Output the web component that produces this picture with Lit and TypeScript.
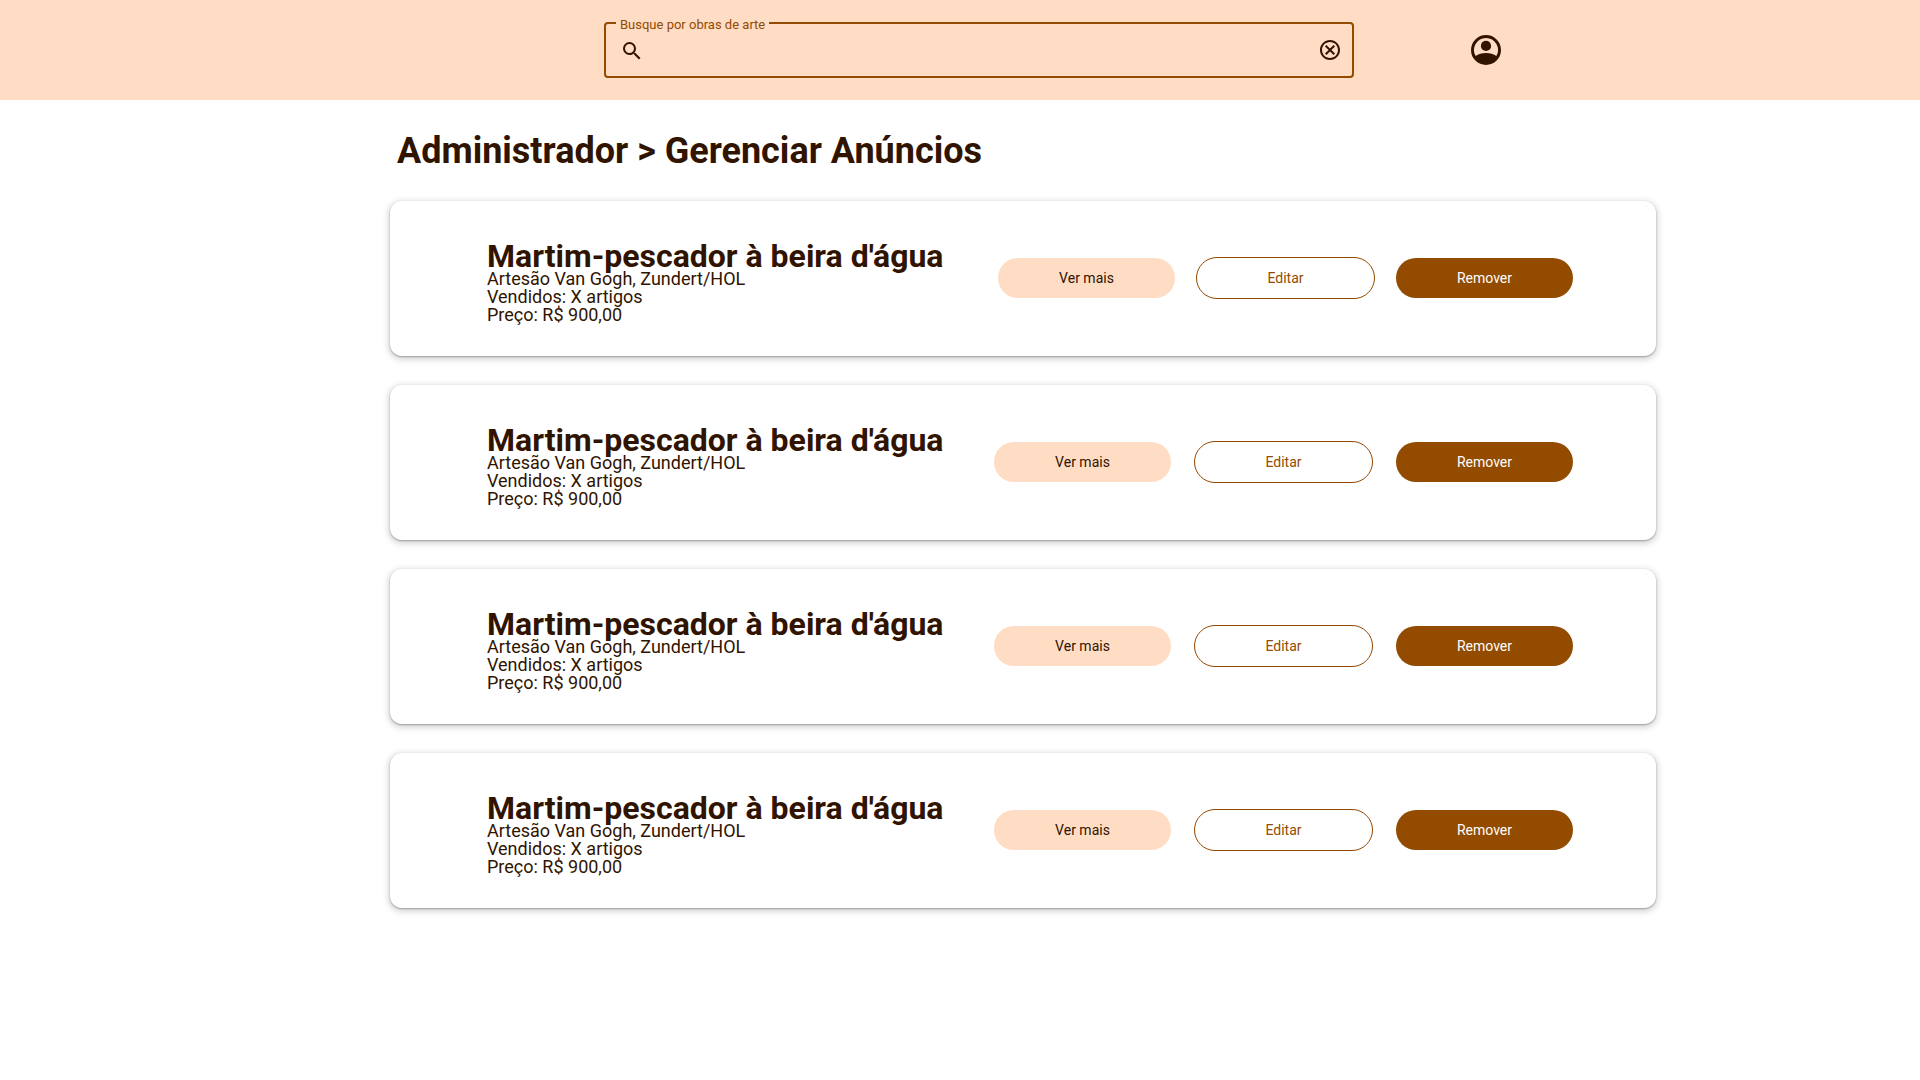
import { LitElement, html, css } from "lit";
import { customElement, property } from "lit/decorators.js";
import { classMap } from "lit/directives/class-map.js";

interface Listing {
  title: string;
  artisan: string;
  sold: string;
  price: string;
}

const listings: Listing[] = Array.from({ length: 4 }, () => ({
  title: "Martim-pescador à beira d'água",
  artisan: "Artesão Van Gogh, Zundert/HOL",
  sold: "Vendidos: X artigos",
  price: "Preço: R$ 900,00",
}));

@customElement("search-bar")
export class SearchBar extends LitElement {
  static styles = css`
    :host {
      display: block;
      min-width: 0;
    }
    .field {
      margin: 0;
      padding: 0 10px 9px;
      min-width: 0;
      border: 2px solid #934b00;
      border-radius: 4px;
    }
    .legend {
      padding: 4px 4px 0;
      font-size: 13px;
      line-height: 16px;
      color: #934b00;
    }
    .row {
      display: flex;
      align-items: center;
      gap: 16px;
      height: 34px;
      padding-left: 4px;
    }
    .icon {
      display: block;
      flex: none;
      width: 24px;
      height: 24px;
      fill: #301400;
    }
    .input {
      flex: 1;
      min-width: 0;
      height: 24px;
      padding: 0;
      border: 0;
      outline: 0;
      background: transparent;
      font: 16px/24px Roboto, sans-serif;
      color: #301400;
    }
    .clear {
      padding: 0;
      border: 0;
      background: none;
      cursor: pointer;
    }
  `;

  render() {
    return html`
      <fieldset class="field">
        <legend class="legend"><label for="search">Busque por obras de arte</label></legend>
        <div class="row">
          <svg class="icon" viewBox="0 -1 24 24" aria-hidden="true">
            <path d="M15.5 14h-.79l-.28-.27A6.471 6.471 0 0 0 16 9.5 6.5 6.5 0 1 0 9.5 16c1.61 0 3.09-.59 4.23-1.57l.27.28v.79l5 4.99L20.49 19l-4.99-5zm-6 0C7.01 14 5 11.99 5 9.5S7.01 5 9.5 5 14 7.01 14 9.5 11.99 14 9.5 14z" />
          </svg>
          <input class="input" id="search" type="text" />
          <button class="clear" type="button" aria-label="Limpar busca">
            <svg class="icon" viewBox="0 0 24 24" aria-hidden="true">
              <path d="M8.400 17 12 13.400 15.600 17 17 15.600 13.400 12 17 8.400 15.600 7 12 10.600 8.400 7 7 8.400 10.600 12 7 15.600zM12 2C6.470 2 2 6.470 2 12s4.470 10 10 10 10-4.470 10-10S17.530 2 12 2zm0 18c-4.410 0-8-3.590-8-8s3.590-8 8-8 8 3.590 8 8-3.590 8-8 8z" />
            </svg>
          </button>
        </div>
      </fieldset>
    `;
  }
}

@customElement("listing-card")
export class ListingCard extends LitElement {
  static styles = css`
    :host {
      display: block;
    }
    .card {
      display: flex;
      justify-content: space-between;
      gap: 24px;
      box-sizing: border-box;
      min-height: 155px;
      padding: 0 83px 0 97px;
      border-radius: 12px;
      background: #fff;
      box-shadow: 0 1px 2px rgba(0, 0, 0, 0.3), 0 2px 6px 2px rgba(0, 0, 0, 0.15);
    }
    .info {
      padding: 41px 0 32px;
    }
    .title {
      margin: 0;
      font-size: 32px;
      line-height: 28px;
      font-weight: 700;
    }
    .line {
      margin: 0;
      font-size: 18px;
      line-height: 18px;
    }
    .actions {
      display: flex;
      align-items: center;
      gap: 23px;
      padding-bottom: 1px;
    }
    .actions.tight {
      gap: 21px;
    }
    .button {
      box-sizing: border-box;
      width: 177px;
      height: 40px;
      padding: 0;
      border: 0;
      border-radius: 20px;
      font: 14px/20px Roboto, sans-serif;
      cursor: pointer;
    }
    .tonal {
      background: #ffdcc4;
      color: #301400;
    }
    .outlined {
      width: 179px;
      height: 42px;
      border: 1px solid #934b00;
      border-radius: 21px;
      background: transparent;
      color: #934b00;
    }
    .filled {
      background: #934b00;
      color: #fff;
    }
  `;

  @property({ attribute: false }) listing!: Listing;
  @property({ type: Boolean }) tight = false;

  render() {
    const { title, artisan, sold, price } = this.listing;
    return html`
      <article class="card">
        <div class="info">
          <h2 class="title">${title}</h2>
          <p class="line">${artisan}</p>
          <p class="line">${sold}</p>
          <p class="line">${price}</p>
        </div>
        <div class=${classMap({ actions: true, tight: this.tight })}>
          <button class="button tonal" type="button">Ver mais</button>
          <button class="button outlined" type="button">Editar</button>
          <button class="button filled" type="button">Remover</button>
        </div>
      </article>
    `;
  }
}

@customElement("app-root")
export class AppRoot extends LitElement {
  static styles = css`
    :host {
      display: block;
      min-height: 100vh;
      background: #fff;
      color: #301400;
      font-family: Roboto, sans-serif;
    }
    .header {
      display: grid;
      grid-template-columns: 604fr 750fr 566fr;
      box-sizing: border-box;
      height: 100px;
      background: #ffdcc4;
    }
    .search {
      grid-column: 2;
      padding-top: 13px;
    }
    .account {
      align-self: center;
      justify-self: start;
      margin-left: 114px;
      padding: 0;
      border: 0;
      background: none;
      cursor: pointer;
    }
    .avatar {
      display: block;
      width: 36px;
      height: 36px;
      fill: #301400;
    }
    .main {
      padding: 29px 264px 48px 390px;
    }
    .heading {
      margin: 0 0 28px;
      padding-left: 7px;
      font-size: 36px;
      line-height: 44px;
      font-weight: 700;
    }
    .list {
      display: grid;
      gap: 29px;
    }
  `;

  render() {
    return html`
      <header class="header">
        <search-bar class="search"></search-bar>
        <button class="account" type="button" aria-label="Conta">
          <svg class="avatar" viewBox="0 0 24 24" aria-hidden="true">
            <path fill-rule="evenodd" d="M12 2a10 10 0 1 0 0 20 10 10 0 0 0 0-20zM12 4a8 8 0 0 1 6.900 12.050C17.200 14.700 14.700 14 12 14s-5.200.7-6.900 2.050A8 8 0 0 1 12 4z" />
            <circle cx="12" cy="9.300" r="3.400" />
          </svg>
        </button>
      </header>
      <main class="main">
        <h1 class="heading">Administrador &gt; Gerenciar Anúncios</h1>
        <section class="list">
          ${listings.map(
            (item, index) => html`<listing-card .listing=${item} ?tight=${index === 0}></listing-card>`
          )}
        </section>
      </main>
    `;
  }
}
